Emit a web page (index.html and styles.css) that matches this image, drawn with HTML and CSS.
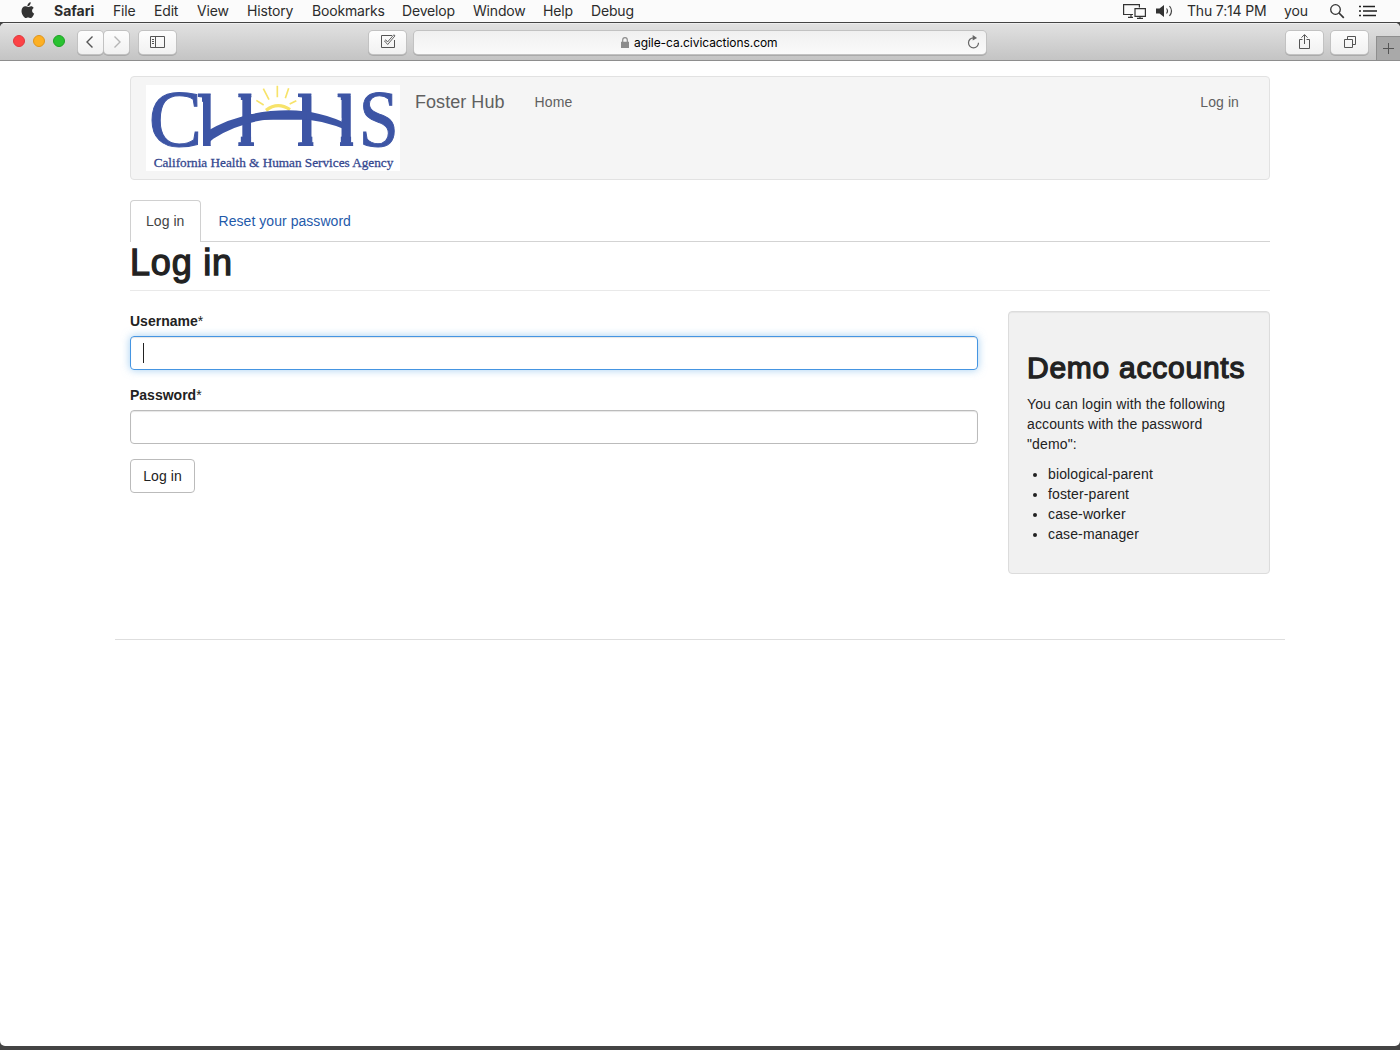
FILE: index.html
```html
<!DOCTYPE html>
<html lang="en">
<head>
<meta charset="utf-8">
<title>Log in | Foster Hub</title>
<link rel="stylesheet" href="styles.css">
</head>
<body>
<div class="menubar">
  <svg class="apple" width="14" height="17" viewBox="0 0 14 17"><path fill="#333" d="M9.700 .3c.1 1.200-.4 2.200-1 2.900-.7.7-1.500 1.100-2.300 1-.1-1.100.4-2.100 1-2.700.6-.7 1.500-1.200 2.300-1.200zM12.700 6C11.600 6.700 11.100 7.500 11.100 8.700c0 1.400.9 2.400 2.100 2.900-.4 1.200-1 2.200-1.700 3.100-.6.8-1.100 1.300-2 1.300s-1.300-.5-2.400-.5-1.500.5-2.300.5c-.9 0-1.500-.6-2.200-1.500C1.400 13.100.5 11 .5 9c0-3 1.900-4.700 3.800-4.700 1.100 0 2 .7 2.700.7.800 0 1.800-.8 3.100-.8 1 0 2 .6 2.600 1.800z"/></svg>
  <nav class="menus"><b class="m1">Safari</b><span class="m2">File</span><span class="m3">Edit</span><span class="m4">View</span><span class="m5">History</span><span class="m6">Bookmarks</span><span class="m7">Develop</span><span class="m8">Window</span><span class="m9">Help</span><span>Debug</span></nav>
  <svg class="screens" width="24" height="16" viewBox="0 0 24 16" fill="none" stroke="#333" stroke-width="1.200"><path d="M10 11.500H.6V1.600h15.800v3M12 5.600h10.400v7.800H12zM5 14.400h5M8 11.500v3M14 15.400h6M17 13v2"/></svg>
  <svg class="speaker" width="18" height="14" viewBox="0 0 18 14"><path fill="#333" d="M0 4.500h3.500L8 1v12L3.500 9.500H0z"/><path d="M10.500 4.500q2 2.500 0 5M13.500 2q4 5 0 10" fill="none" stroke="#444" stroke-width="1.200"/></svg>
  <span class="clock">Thu 7:14 PM</span>
  <span class="user">you</span>
  <svg class="search" width="16" height="16" viewBox="0 0 16 16" fill="none" stroke="#333"><circle cx="6.500" cy="6.500" r="4.800" stroke-width="1.300"/><path d="m10 10 4.800 4.800" stroke-width="1.700"/></svg>
  <svg class="list" width="18" height="12" viewBox="0 0 18 12" stroke="#222" stroke-width="1.600"><path d="M0 1.500h2M4 1.500h12M0 6h2M4 6h14M0 10.500h2M4 10.500h13"/></svg>
</div>
<div class="window">
  <div class="toolbar">
    <div class="lights"><i class="red"></i><i class="amber"></i><i class="green"></i></div>
    <div class="pair">
      <span class="btn"><svg class="back" width="10" height="14" viewBox="0 0 10 14"><path d="M7.500 1.500 2 7l5.500 5.500" fill="none" stroke="#555" stroke-width="1.400"/></svg></span>
      <span class="btn"><svg width="10" height="14" viewBox="0 0 10 14"><path d="M2.500 1.500 8 7l-5.500 5.500" fill="none" stroke="#b5b5b5" stroke-width="1.400"/></svg></span>
    </div>
    <span class="btn side"><svg width="16" height="14" viewBox="0 0 16 14" fill="none" stroke="#555"><path d="M.5 1.500h14v11H.5zM5.500 1.500v11M2 4.500h2M2 6.500h2M2 8.500h2"/></svg></span>
    <span class="btn check"><svg width="16" height="16" viewBox="0 0 16 16" fill="none" stroke="#555"><path d="M12 1.500H1.500v12h13V6"/><path stroke-width=".9" d="m4.500 7 1.300-1.200L7.500 8l6.300-7.200 1.200 1L7.700 10.500z"/></svg></span>
    <div class="address">
      <svg class="lock" width="8" height="11" viewBox="0 0 8 11"><path d="M1.700 5V3a2.300 2.300 0 0 1 4.600 0v2" fill="none" stroke="#8c8c8c" stroke-width="1.200"/><path fill="#8c8c8c" d="M0 4.700h8V11H0z"/></svg>
      <span>agile-ca.civicactions.com</span>
      <svg class="reload" width="13" height="14" viewBox="0 0 13 14"><path d="M6.500 2.800A5 5 0 1 0 11.500 7.800" fill="none" stroke="#666" stroke-width="1.200"/><path fill="#666" d="M5.700 0v5.500l4.400-2.600z"/></svg>
    </div>
    <span class="btn share"><svg width="14" height="17" viewBox="0 0 14 17" fill="none" stroke="#555"><path d="M4.500 5.500h-3v9h10v-9h-3M6.500 10V.8M3.500 3.600l3-3 3 3"/></svg></span>
    <span class="btn tabs-btn"><svg width="14" height="14" viewBox="0 0 14 14" fill="none" stroke="#555"><path d="M1.500 4.500h8v8h-8zM4.500 4V1.500h8v8H10"/></svg></span>
    <span class="plus"><svg width="12" height="12" viewBox="0 0 12 12"><path d="M0 5.500h11M5.500 0v11" stroke="#555"/></svg></span>
  </div>
  <div class="page">
    <header class="navbar">
      <svg class="logo" width="254" height="86" viewBox="63 45 762 258">
        <defs>
          <clipPath id="towers"><path d="M218 45h39v185h-23V95h-16zM340 45h39V200h8v30h-47V200h12V90h-12zM519 45h40v155h6v30h-46V200h10V90h-10zM638 45h39V200h8v30h-40V200h5V90h-12z"/></clipPath>
        </defs>
        <path fill="#fff" d="M63 45h762v258H63z"/>
        <g fill="none" stroke="#f7e36a" stroke-width="5"><path d="M423 121q35-27 72-2" stroke-width="10"/><path d="m394 91 22 14M415 56l17 33M457 47v35M491 55l-10 30M514 92l-20 10"/></g>
        <g class="letters">
          <text x="71" y="228" font-size="240" textLength="160" lengthAdjust="spacingAndGlyphs">C</text>
          <g clip-path="url(#towers)"><text x="200" y="226" font-size="237" textLength="209" lengthAdjust="spacingAndGlyphs">H</text><text x="500" y="226" font-size="237" textLength="209" lengthAdjust="spacingAndGlyphs">H</text></g>
          <text x="701" y="228" font-size="240" textLength="120" lengthAdjust="spacingAndGlyphs">S</text>
        </g>
        <path fill="#3d55a5" d="M240 187Q345 122 490 121q95 0 182 44v18q-85-36-175-38-135-2-232 61l-25 22z"/>
        <path fill="#3d55a5" d="M370 132h175v17H370z"/>
        <text class="tagline" x="86" y="290" font-size="37" textLength="719" lengthAdjust="spacingAndGlyphs">California Health &amp; Human Services Agency</text>
      </svg>
      <a class="brand">Foster Hub</a>
      <a class="home">Home</a>
      <a class="login-link">Log in</a>
    </header>
    <div class="tabs"><a class="tab active">Log in</a><a class="tab">Reset your password</a></div>
    <h1>Log in</h1>
    <div class="row">
      <form class="form">
        <label>Username<span>*</span></label>
        <div class="input focus"><i class="caret"></i></div>
        <label>Password<span>*</span></label>
        <div class="input"></div>
        <button type="button">Log in</button>
      </form>
      <aside class="well">
        <h2>Demo accounts</h2>
        <p>You can login with the following accounts with the password "demo":</p>
        <ul><li>biological-parent</li><li>foster-parent</li><li>case-worker</li><li>case-manager</li></ul>
      </aside>
    </div>
    <footer></footer>
  </div>
</div>
</body>
</html>
```
FILE: styles.css
```css
* { box-sizing: border-box; }
body { margin: 0; height: 1050px; overflow: hidden; display: flex; flex-direction: column; background: #444; font: 14px/20px "Liberation Sans", Arial, sans-serif; color: #222; }
svg { display: block; flex: none; }
.menubar { height: 22px; flex: none; display: flex; align-items: center; background: #fbfbfb; padding: 0 23px 0 21px; font: 14px/22px Inter, sans-serif; letter-spacing: -.17px; color: #2c2c2c; white-space: nowrap; }
.apple { margin: -2px 19px 0 0; }
.menus { display: flex; flex: 1; }
.menus > * { flex: none; }
.m1 { width: 59px; font-weight: 700; letter-spacing: 0; }
.m2 { width: 41px; }
.m3 { width: 43px; }
.m4 { width: 50px; }
.m5 { width: 65px; }
.m6 { width: 90px; }
.m7 { width: 71px; }
.m8 { width: 70px; }
.m9 { width: 48px; }
.screens { margin-right: 9px; }
.speaker { margin-right: 13px; }
.clock { width: 97px; }
.user { width: 45px; }
.search { margin-right: 14px; }
.window { margin-top: 1px; height: 1023px; flex: none; border-radius: 5px; overflow: hidden; background: #fff; }
.toolbar { height: 38px; display: flex; align-items: flex-start; padding: 7px 0 0 13px; background: linear-gradient(#e1e1e1, #c4c4c4); border-top: 1px solid #eee; border-bottom: 1px solid #8e8e8e; }
.lights { display: flex; gap: 8px; margin: 4px 12px 0 0; }
.lights i { width: 12px; height: 12px; border-radius: 50%; border: 1px solid #e0383d; background: #fc4346; }
.lights .amber { background: #fdb024; border-color: #df951c; }
.lights .green { background: #29c231; border-color: #1ea226; }
.btn, .address { height: 23px; background: linear-gradient(#fdfdfd, #f1f1f1); border-radius: 4px; box-shadow: 0 0 0 1px #c2c2c2, 0 1px 0 1px #aaa; display: flex; align-items: center; justify-content: center; }
.btn svg { margin-top: -1px; }
.btn .back { margin-left: -2px; }
.pair { display: flex; gap: 1px; margin: 0 10px 0 1px; }
.pair .btn { width: 25px; }
.side { width: 37px; }
.check { width: 37px; margin-left: 193px; }
.address { width: 572px; margin-left: 8px; color: #000; font: 12px/23px Inter, sans-serif; letter-spacing: -.06px; padding: 0 6px 0 206px; justify-content: flex-start; background: linear-gradient(#f0f0f0, #fafafa); }
.lock { margin: -1px 5px 0 1px; }
.reload { margin: -2px 0 0 auto; }
.share { width: 37px; margin-left: 300px; }
.tabs-btn { width: 37px; margin-left: 8px; }
.plus { width: 24px; height: 24px; margin: 5px 0 0 8px; background: #a9a9a9; border: 1px solid #8e8e8e; border-width: 1px 0 0 1px; display: flex; align-items: center; justify-content: center; }
.page { width: 1170px; margin: 0 auto; padding-top: 15px; }
.navbar { margin: 0 15px 20px; height: 104px; background: #f5f5f5; border: 1px solid #e2e2e2; border-radius: 4px; display: flex; align-items: flex-start; padding: 8px 30px 0 15px; color: #606060; }
.letters { fill: #3d55a5; stroke: #3d55a5; stroke-width: 3; font-family: "Liberation Serif", serif; }
.tagline { fill: #34478f; stroke: #34478f; stroke-width: .8; font-family: "Liberation Serif", serif; }
.brand { font-size: 18px; letter-spacing: .05px; margin: 7px 30px 0 15px; }
.home { margin-top: 7px; letter-spacing: .1px; }
.login-link { margin: 7px 0 0 auto; letter-spacing: .1px; }
.tabs { margin: 0 15px; height: 42px; display: flex; border-bottom: 1px solid #d3d3d3; }
.tab { height: 42px; padding: 11px 16px 0 15.5px; color: #1f5aaa; letter-spacing: .05px; }
.tab.active { width: 71px; padding: 10px 15px 0; border: 1px solid #d0d0d0; border-bottom: 0; border-radius: 4px 4px 0 0; background: #fff; color: #444; margin-right: 2px; }
h1, h2 { font-weight: 400; line-height: 1.1; color: #222; -webkit-text-stroke: 1.3px #222; }
h1 { margin: 0 15px 20px; height: 49px; padding-top: 1px; border-bottom: 1px solid #e9e9e9; font-size: 36px; letter-spacing: .8px; }
.row { margin: 0 15px; display: flex; gap: 30px; align-items: flex-start; }
.form { width: 848px; }
label { display: block; font-weight: 700; margin-bottom: 5px; letter-spacing: 0; }
label span { font-weight: 400; }
.input { height: 34px; border: 1px solid #bbb; border-radius: 4px; margin-bottom: 15px; padding: 6px 12px; box-shadow: inset 0 1px 1px rgba(0,0,0,.1); }
.focus { border-color: #4595e2; box-shadow: inset 0 1px 1px rgba(0,0,0,.1), 0 0 8px rgba(102,175,233,.6); }
.caret { display: block; width: 1px; height: 20px; background: #222; }
button { display: block; width: 65px; height: 34px; padding: 0; border: 1px solid #bbb; border-radius: 4px; background: #fff; color: #222; font: 14px/20px "Liberation Sans", Arial, sans-serif; letter-spacing: .1px; }
.well { width: 262px; height: 263px; background: #f1f1f1; border: 1px solid #dcdcdc; border-radius: 4px; padding: 39px 18px 0; box-shadow: inset 0 1px 1px rgba(0,0,0,.05); letter-spacing: .13px; }
h2 { margin: 0 0 10px; font-size: 30px; white-space: nowrap; letter-spacing: .75px; }
p { margin: 0 0 10px; }
ul { margin: 0; padding-left: 21px; }
footer { margin-top: 65px; border-top: 1px solid #dedede; }
```
